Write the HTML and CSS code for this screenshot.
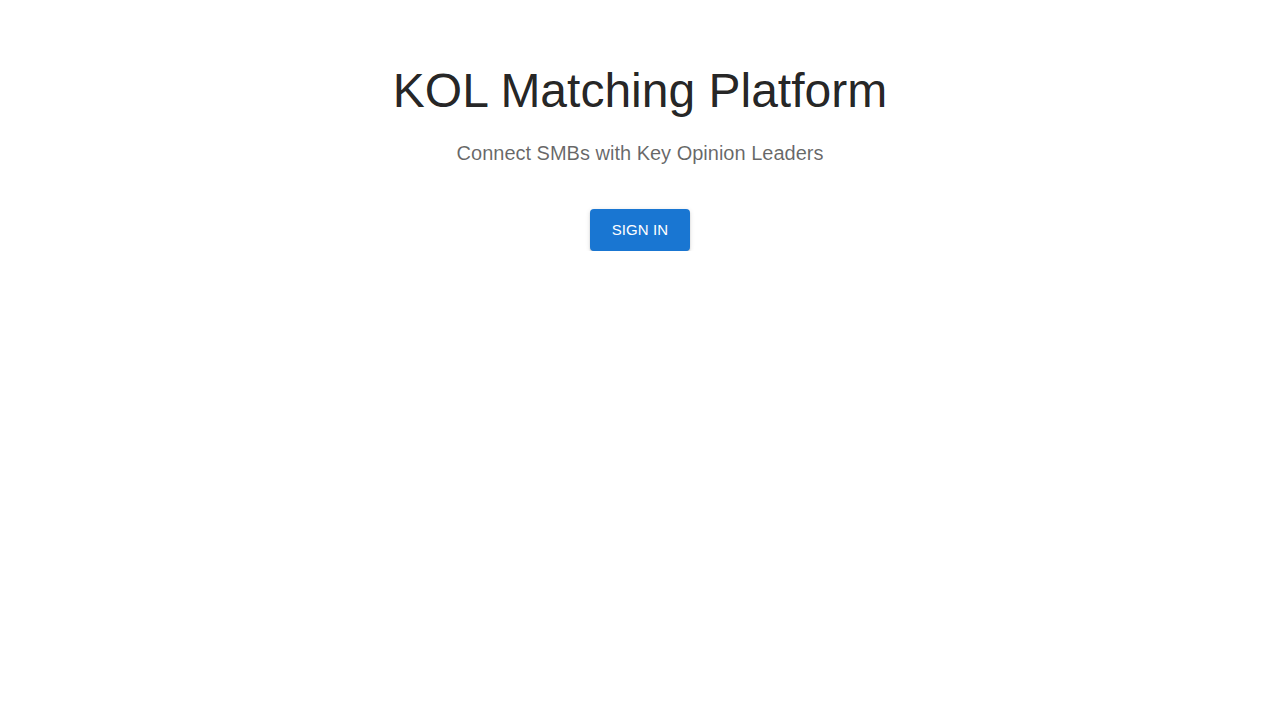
FILE: index.html
```html
<!DOCTYPE html>
<html lang="en">
<head>
<meta charset="utf-8">
<title>KOL Matching Platform</title>
<link rel="stylesheet" href="styles.css">
</head>
<body>
<main class="container">
  <section class="hero">
    <h1 class="title">KOL Matching Platform</h1>
    <p class="subtitle">Connect SMBs with Key Opinion Leaders</p>
    <div class="actions">
      <button class="btn-primary" type="button">Sign In</button>
    </div>
  </section>
</main>
</body>
</html>
```

FILE: styles.css
```css
* { box-sizing: border-box; }
html, body {
  margin: 0;
  padding: 0;
  background: #fff;
}
body {
  font-family: "Liberation Sans", Arial, Helvetica, sans-serif;
  color: rgba(0, 0, 0, 0.87);
}
.container {
  max-width: 600px;
  margin: 0 auto;
  padding: 0 24px;
}
.hero {
  margin-top: 63px;
  display: flex;
  flex-direction: column;
  align-items: center;
  text-align: center;
}
.title {
  margin: 0 0 17.8px;
  font-size: 48px;
  font-weight: 400;
  line-height: 56px;
  color: rgba(0, 0, 0, 0.87);
}
.subtitle {
  margin: 0 0 7px;
  font-size: 20px;
  font-weight: 400;
  line-height: 32px;
  color: rgba(0, 0, 0, 0.6);
}
.actions {
  margin-top: 33px;
}
.btn-primary {
  font-family: "Liberation Sans", Arial, Helvetica, sans-serif;
  font-size: 15px;
  font-weight: 400;
  line-height: 26px;
  letter-spacing: 0.1px;
  text-transform: uppercase;
  color: #fff;
  background: #1976d2;
  border: 0;
  border-radius: 4px;
  padding: 8px 22px;
  min-width: 64px;
  cursor: pointer;
  box-shadow: 0 3px 1px -2px rgba(0,0,0,0.2), 0 2px 2px 0 rgba(0,0,0,0.14), 0 1px 5px 0 rgba(0,0,0,0.12);
}
```
